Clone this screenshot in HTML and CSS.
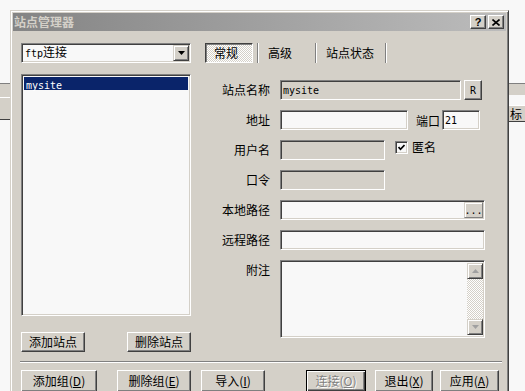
FILE: index.html
```html
<!DOCTYPE html>
<html lang="zh-CN">
<head>
  <meta charset="UTF-8">
  <meta name="viewport" content="width=device-width, initial-scale=1.0">
  <title>站点管理器</title>
  <link rel="stylesheet" href="styles.css">
</head>
<body>
  <!-- 对话框后面的主窗口 -->
  <div class="backdrop">
    <div class="bar-left">
      <div class="tool-band"></div>
      <div class="tool-band tall"></div>
    </div>
    <div class="bar-right">
      <div class="tool-band short"></div>
      <div class="gap-band"></div>
      <div class="col-header">标</div>
    </div>
  </div>

  <div class="dialog">
    <div class="titlebar">
      <span class="title">站点管理器</span>
      <div class="caption-btns">
        <span class="cap-btn">?</span>
        <span class="cap-btn">
          <svg width="8" height="7" viewBox="0 0 8 7"><path d="M0.5 0.5 L7.5 6.5 M7.5 0.5 L0.5 6.5" stroke="#000" stroke-width="1.6"/></svg>
        </span>
      </div>
    </div>

    <div class="dialog-body">
      <div class="main">
        <div class="left-col">
          <div class="combo">
            <span class="combo-text"><span class="mono">ftp</span>连接</span>
            <span class="combo-arrow">
              <svg width="7" height="4" viewBox="0 0 7 4"><path d="M0 0 H7 L3.5 4 Z" fill="#000"/></svg>
            </span>
          </div>
          <div class="site-list">
            <div class="site-item selected"><span class="mono">mysite</span></div>
          </div>
          <div class="left-btns">
            <button class="btn btn-site">添加站点</button>
            <button class="btn btn-site">删除站点</button>
          </div>
        </div>

        <div class="right-col">
          <div class="tabs">
            <span class="tab tab-active">常规</span>
            <span class="tab-sep"></span>
            <span class="tab tab-adv">高级</span>
            <span class="tab-sep"></span>
            <span class="tab tab-status">站点状态</span>
            <span class="tab-sep"></span>
          </div>

          <div class="form">
            <label class="lbl">站点名称</label>
            <div class="row">
              <div class="field disabled w-name"><span class="mono">mysite</span></div>
              <button class="btn btn-r"><span class="mono">R</span></button>
            </div>

            <label class="lbl">地址</label>
            <div class="row">
              <div class="field w-addr"></div>
              <span class="port-lbl">端口</span>
              <div class="field w-port"><span class="mono">21</span></div>
            </div>

            <label class="lbl">用户名</label>
            <div class="row">
              <div class="field disabled w-user"></div>
              <span class="check">
                <span class="check-box">
                  <svg width="7" height="7" viewBox="0 0 7 7"><path d="M0.5 3 L2.5 5.3 L6.5 1" fill="none" stroke="#000" stroke-width="1.7"/></svg>
                </span>
                匿名
              </span>
            </div>

            <label class="lbl">口令</label>
            <div class="row">
              <div class="field disabled w-user"></div>
            </div>

            <label class="lbl">本地路径</label>
            <div class="row">
              <div class="field w-full">
                <span class="browse-btn"><span class="mono">...</span></span>
              </div>
            </div>

            <label class="lbl">远程路径</label>
            <div class="row">
              <div class="field w-full"></div>
            </div>

            <label class="lbl">附注</label>
            <div class="memo">
              <div class="memo-text"></div>
              <div class="scrollbar">
                <span class="scroll-btn">
                  <svg width="7" height="4" viewBox="0 0 7 4"><path d="M0 4 H7 L3.5 0 Z" fill="#a0a0a0"/></svg>
                </span>
                <span class="scroll-track"></span>
                <span class="scroll-btn">
                  <svg width="7" height="4" viewBox="0 0 7 4"><path d="M0 0 H7 L3.5 4 Z" fill="#a0a0a0"/></svg>
                </span>
              </div>
            </div>
          </div>
        </div>
      </div>

      <div class="separator"></div>

      <div class="bottom-btns">
        <button class="btn btn-add-group">添加组(<u>D</u>)</button>
        <button class="btn btn-del-group">删除组(<u>E</u>)</button>
        <button class="btn btn-import">导入(<u>I</u>)</button>
        <button class="btn btn-default btn-connect">连接(<u>O</u>)</button>
        <button class="btn btn-exit">退出(<u>X</u>)</button>
        <button class="btn btn-apply">应用(<u>A</u>)</button>
      </div>
    </div>
  </div>
</body>
</html>
```

FILE: styles.css
```css
body {
  margin: 0;
  height: 391px;
  overflow: hidden;
  position: relative;
  background-color: #f8f8f8;
  font-family: "Noto Sans CJK SC", sans-serif;
  font-size: 12px;
  color: #000;
}
.mono {
  font-family: "DejaVu Sans Mono", monospace;
  font-size: 10px;
}

/* 背景窗口 */
.backdrop {
  display: flex;
  justify-content: space-between;
}
.bar-left {
  width: 10px;
  margin-top: 83px;
}
.bar-right {
  width: 16px;
  margin-top: 83px;
}
.tool-band {
  height: 13px;
  background: #d4d0c8;
  border-top: 1px solid #808080;
}
.tool-band.tall {
  height: 21px;
  border-top: 1px solid #fff;
  border-bottom: 1px solid #404040;
}
.tool-band.short {
  height: 11px;
}
.gap-band {
  height: 10px;
}
.col-header {
  height: 15px;
  line-height: 15px;
  background: #d4d0c8;
  border-top: 1px solid #fff;
  border-bottom: 1px solid #404040;
  padding-left: 1px;
}

/* 对话框 */
.dialog {
  position: absolute;
  left: 10px;
  top: 10px;
  width: 499px;
  height: 400px;
  box-sizing: border-box;
  background: #d4d0c8;
  border: 1px solid;
  border-color: #d4d0c8 #404040 #404040 #d4d0c8;
  box-shadow: inset 1px 1px #fff, inset -1px -1px #808080;
  padding: 2px;
}
.titlebar {
  height: 18px;
  display: flex;
  align-items: center;
  justify-content: space-between;
  padding: 0 2px 0 1px;
  background: linear-gradient(to right, #848484, #bcbcbc);
}
.title {
  color: #d4d0c8;
  font-weight: bold;
  line-height: 18px;
}
.caption-btns {
  display: flex;
  gap: 2px;
}
.cap-btn {
  width: 16px;
  height: 14px;
  box-sizing: border-box;
  display: flex;
  align-items: center;
  justify-content: center;
  background: #d4d0c8;
  border: 1px solid;
  border-color: #fff #404040 #404040 #fff;
  box-shadow: inset -1px -1px #808080;
  font-family: "Liberation Sans", sans-serif;
  font-weight: bold;
  font-size: 11px;
  line-height: 12px;
}

.dialog-body {
  padding: 12px 7px 0 8px;
}
.main {
  display: flex;
  gap: 14px;
  align-items: flex-start;
}

/* 凹陷边框 */
.combo, .site-list, .field, .memo, .check-box {
  box-sizing: border-box;
  border: 1px solid;
  border-color: #808080 #fff #fff #808080;
  box-shadow: inset 1px 1px #404040, inset -1px -1px #d4d0c8;
  background: #f8f8f8;
}

.left-col {
  width: 170px;
}
.combo {
  height: 20px;
  padding: 1px;
  display: flex;
  align-items: center;
}
.combo-text {
  flex: 1;
  padding-left: 2px;
  line-height: 16px;
}
.combo-arrow {
  width: 16px;
  height: 16px;
  box-sizing: border-box;
  display: flex;
  align-items: center;
  justify-content: center;
  background: #d4d0c8;
  border: 1px solid;
  border-color: #d4d0c8 #404040 #404040 #d4d0c8;
  box-shadow: inset 1px 1px #fff, inset -1px -1px #808080;
}
.site-list {
  margin-top: 11px;
  height: 242px;
  padding: 2px;
}
.site-item {
  height: 13px;
  line-height: 13px;
  padding-left: 2px;
}
.site-item.selected {
  background: #0a246a;
  color: #fff;
}
.left-btns {
  margin-top: 16px;
  display: flex;
  justify-content: space-between;
}

/* 按钮 */
.btn {
  height: 20px;
  padding: 0;
  background: #d4d0c8;
  border: 1px solid;
  border-color: #fff #404040 #404040 #fff;
  box-shadow: inset -1px -1px #808080;
  font-family: "Noto Sans CJK SC", sans-serif;
  font-size: 12px;
  color: #000;
  line-height: 16px;
}
.btn-site {
  width: 64px;
}

/* 选项卡 */
.right-col {
  width: 280px;
}
.tabs {
  height: 20px;
  display: flex;
  align-items: stretch;
}
.tab {
  box-sizing: border-box;
  padding-left: 9px;
  line-height: 20px;
}
.tab-active {
  width: 48px;
  padding-left: 8px;
  border: 1px solid;
  border-color: #404040 #fff #fff #404040;
  box-shadow: inset 1px 1px #808080;
  background-color: #d4d0c8;
  background-image: repeating-conic-gradient(#fff 0 25%, #d4d0c8 0 50%);
  background-size: 2px 2px;
  line-height: 18px;
  margin-right: 4px;
}
.tab-adv {
  width: 56px;
}
.tab-status {
  width: 68px;
}
.tab-sep {
  width: 0;
  border-left: 1px solid #808080;
  border-right: 1px solid #fff;
}

/* 表单 */
.form {
  margin-top: 17px;
  display: grid;
  grid-template-columns: 65px 1fr;
  column-gap: 10px;
  row-gap: 10px;
}
.lbl {
  text-align: right;
  line-height: 20px;
  white-space: nowrap;
}
.row {
  height: 20px;
  display: flex;
  align-items: center;
}
.field {
  height: 20px;
  padding: 1px 2px;
  display: flex;
  align-items: center;
}
.field.disabled {
  background: #d4d0c8;
}
.w-name { width: 181px; }
.w-addr { width: 128px; }
.w-port { width: 38px; margin-left: 2px; }
.w-user { width: 105px; }
.w-full { width: 205px; padding-right: 1px; }
.btn-r {
  width: 18px;
  margin-left: 3px;
}
.port-lbl {
  margin-left: 8px;
}
.check {
  margin-left: 10px;
  align-self: flex-start;
  display: flex;
  align-items: center;
  gap: 4px;
  line-height: 14px;
}
.check-box {
  width: 13px;
  height: 13px;
  display: flex;
  align-items: center;
  justify-content: center;
}
.browse-btn {
  margin-left: auto;
  width: 19px;
  height: 16px;
  box-sizing: border-box;
  display: flex;
  align-items: flex-end;
  justify-content: center;
  background: #d4d0c8;
  border: 1px solid;
  border-color: #d4d0c8 #808080 #808080 #d4d0c8;
  box-shadow: inset 1px 1px #fff;
  line-height: 12px;
}
.memo {
  width: 205px;
  height: 78px;
  padding: 2px 1px 2px 2px;
  display: flex;
}
.memo-text {
  flex: 1;
}
.scrollbar {
  width: 16px;
  display: flex;
  flex-direction: column;
}
.scroll-btn {
  width: 16px;
  height: 16px;
  box-sizing: border-box;
  display: flex;
  align-items: center;
  justify-content: center;
  background: #d4d0c8;
  border: 1px solid;
  border-color: #d4d0c8 #404040 #404040 #d4d0c8;
  box-shadow: inset 1px 1px #fff, inset -1px -1px #808080;
}
.scroll-track {
  flex: 1;
  background-color: #d4d0c8;
  background-image: repeating-conic-gradient(#fff 0 25%, #d4d0c8 0 50%);
  background-size: 2px 2px;
}

/* 底部 */
.separator {
  margin: 9px -3px 0 -1px;
  border-top: 1px solid #808080;
  border-bottom: 1px solid #fff;
}
.bottom-btns {
  margin-top: 7px;
  display: flex;
}
.bottom-btns .btn {
  height: 22px;
}
.btn-add-group { width: 76px; }
.btn-del-group { width: 74px; margin-left: 20px; }
.btn-import { width: 64px; margin-left: 10px; }
.btn-connect { width: 60px; margin-left: auto; }
.btn-exit { width: 58px; margin-left: 9px; }
.btn-apply { width: 59px; margin-left: 7px; }
.btn-default {
  border: 1px solid #000;
  box-shadow: inset 1px 1px #fff, inset -1px -1px #404040, inset -2px -2px #808080;
  color: #808080;
  text-shadow: 1px 1px #fff;
}
```
